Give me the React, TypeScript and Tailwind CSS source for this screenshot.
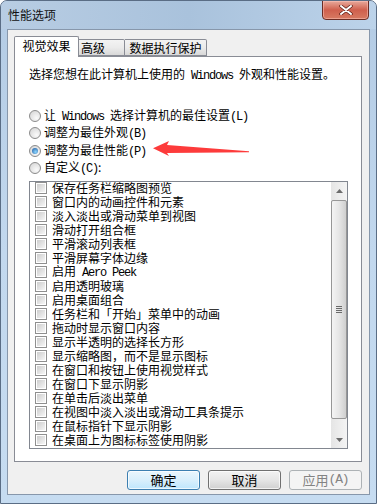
import React from "react";

const effects = [
  "保存任务栏缩略图预览",
  "窗口内的动画控件和元素",
  "淡入淡出或滑动菜单到视图",
  "滑动打开组合框",
  "平滑滚动列表框",
  "平滑屏幕字体边缘",
  "AERO",
  "启用透明玻璃",
  "启用桌面组合",
  "任务栏和「开始」菜单中的动画",
  "拖动时显示窗口内容",
  "显示半透明的选择长方形",
  "显示缩略图，而不是显示图标",
  "在窗口和按钮上使用视觉样式",
  "在窗口下显示阴影",
  "在单击后淡出菜单",
  "在视图中淡入淡出或滑动工具条提示",
  "在鼠标指针下显示阴影",
  "在桌面上为图标标签使用阴影",
];

// half-width latin in the dialog font is narrow, squeeze the mono face to match
function Lat({ children }: { children: React.ReactNode }) {
  return (
    <span className="font-['Liberation_Mono',monospace] tracking-[-1.2px] whitespace-pre">
      {children}
    </span>
  );
}

function Radio({ checked }: { checked?: boolean }) {
  return (
    <span className="w-[12px] h-[12px] rounded-full border border-[#8b8b8b] bg-[radial-gradient(circle_at_65%_70%,#fafafa,#d2d2d2)] flex items-center justify-center shrink-0">
      {checked && (
        <span className="w-[6px] h-[6px] rounded-full bg-[radial-gradient(circle_at_60%_65%,#8fd8ff,#15509a)]" />
      )}
    </span>
  );
}

function Check() {
  return (
    <span className="w-[12px] h-[12px] border border-[#8f8f8f] bg-white p-[1px] shrink-0 flex">
      <span className="flex-1 bg-gradient-to-br from-[#cdcdcd] to-[#f6f6f6]" />
    </span>
  );
}

function Arrow({ up }: { up?: boolean }) {
  return (
    <svg width="7" height="4" viewBox="0 0 7 4">
      <polygon points={up ? "0,4 3.5,0 7,4" : "0,0 7,0 3.5,4"} fill="#6b6b6b" />
    </svg>
  );
}

export default function App() {
  return (
    <div className="w-[377px] h-[504px] bg-white font-['Noto_Sans_CJK_SC',sans-serif] text-[12px] text-black">
      <div className="relative w-[377px] h-[504px] rounded-t-[7px] border border-[#5a6d85] bg-gradient-to-b from-[#b3cbe4] via-[#c2d8ee] to-[#c6dcf1] flex flex-col overflow-hidden">
        {/* title bar */}
        <div className="h-[28px] flex items-center pl-[7px] bg-gradient-to-r from-[#b8cde3] via-[#a9c2dc] to-[#bcd3ea]">
          <span className="leading-[14px] text-[#111] mt-[-1px]">性能选项</span>
        </div>
        <div className="absolute right-[7px] top-[-1px] w-[47px] h-[20px] rounded-b-[4px] border border-[#6b2d25] bg-gradient-to-b from-[#e7a99c] via-[#cf5f4d] to-[#d77a62] flex items-center justify-center shadow-[inset_0_0_0_1px_rgba(255,200,190,0.5)]">
          <svg width="14" height="10" viewBox="0 0 14 10">
            <path d="M2 1 L12 9 M12 1 L2 9" stroke="#5a1e16" strokeWidth="3.4" strokeLinecap="round" />
            <path d="M2 1 L12 9 M12 1 L2 9" stroke="#ffffff" strokeWidth="2" strokeLinecap="round" />
          </svg>
        </div>

        {/* dialog body */}
        <div className="mx-[6px] h-[466px] border border-[#8797ab] bg-[#f0f0f0] pt-[6px] px-[6px]">
          <div className="flex items-end h-[20px]">
            <div className="relative z-10 -mb-px w-[65px] h-[21px] bg-white border border-b-0 border-[#898c95] rounded-t-[2px] flex justify-center pt-[2px] leading-[14px]">
              视觉效果
            </div>
            <div className="w-[46px] h-[17px] border border-l-0 border-[#898c95] rounded-tr-[2px] bg-gradient-to-b from-[#f3f3f3] via-[#ebebeb] to-[#d8d8d8] pl-[2px] pt-[1px] leading-[14px]">
              高级
            </div>
            <div className="w-[82px] h-[17px] border border-l-0 border-[#898c95] rounded-tr-[2px] bg-gradient-to-b from-[#f3f3f3] via-[#ebebeb] to-[#d8d8d8] flex justify-center pt-[1px] leading-[14px]">
              数据执行保护
            </div>
          </div>

          <div className="relative w-[348px] h-[406px] border border-[#898c95] bg-white pl-[14px] pt-[9px]">
            <p className="leading-[16px]">
              选择您想在此计算机上使用的<Lat> Windows </Lat>外观和性能设置。
            </p>

            <div className="mt-[23px] flex flex-col">
              <div className="h-[17.5px] flex items-center gap-[3px]">
                <Radio />
                <span className="leading-[14px]">
                  让<Lat> Windows </Lat>选择计算机的最佳设置<Lat>(L)</Lat>
                </span>
              </div>
              <div className="h-[17.5px] flex items-center gap-[3px]">
                <Radio />
                <span className="leading-[14px]">
                  调整为最佳外观<Lat>(B)</Lat>
                </span>
              </div>
              <div className="h-[17.5px] flex items-center gap-[3px]">
                <Radio checked />
                <span className="leading-[14px]">
                  调整为最佳性能<Lat>(P)</Lat>
                </span>
              </div>
              <div className="h-[17.5px] flex items-center gap-[3px]">
                <Radio />
                <span className="leading-[14px]">
                  自定义<Lat>(C)</Lat>:
                </span>
              </div>
            </div>

            <div className="mt-[4px] w-[319px] h-[268px] border border-[#828790] flex">
              <div className="flex-1 flex flex-col pt-[0px] -mt-px">
                {effects.map((e) => (
                  <div key={e} className="h-[14px] shrink-0 flex items-center gap-[5px] pl-[5px]">
                    <Check />
                    <span className="leading-[14px] whitespace-nowrap">
                      {e === "AERO" ? (
                        <>
                          启用<Lat> Aero Peek</Lat>
                        </>
                      ) : (
                        e
                      )}
                    </span>
                  </div>
                ))}
              </div>
              <div className="w-[16px] flex flex-col bg-gradient-to-r from-[#e5e5e5] to-[#f4f4f4]">
                <div className="h-[18px] flex items-center justify-center">
                  <Arrow up />
                </div>
                <div className="h-[219px] rounded-[2px] border border-[#979797] bg-gradient-to-r from-[#f4f4f4] via-[#e6e6e6] to-[#cfcfcf] flex flex-col items-center justify-center gap-[1px]">
                  <span className="w-[6px] h-px bg-[#6a6a6a]" />
                  <span className="w-[6px] h-px bg-[#6a6a6a]" />
                  <span className="w-[6px] h-px bg-[#6a6a6a]" />
                  <span className="w-[6px] h-px bg-[#6a6a6a]" />
                </div>
                <div className="flex-1" />
                <div className="h-[17px] flex items-center justify-center">
                  <Arrow />
                </div>
              </div>
            </div>

            {/* red annotation arrow */}
            <svg
              className="absolute left-[136px] top-[82px]"
              width="100"
              height="20"
              viewBox="0 0 100 20"
            >
              <polygon
                points="2,9.3 18,2 16,6 98,12.3 98,13.2 16,14 18,17"
                fill="#fd3b3b"
              />
            </svg>
          </div>

          <div className="mt-[8px] w-[348px] flex justify-end gap-[8px] text-[13px]">
            <button className="w-[73px] h-[20px] rounded-[3px] border border-[#3c7fb1] bg-gradient-to-b from-[#eaf6fd] via-[#d9effc] to-[#bee6fd] shadow-[inset_0_0_0_1px_rgba(255,255,255,0.7)] flex items-center justify-center leading-[14px]">
              确定
            </button>
            <button className="w-[73px] h-[20px] rounded-[3px] border border-[#707070] bg-gradient-to-b from-[#f2f2f2] via-[#e6e6e6] to-[#d0d0d0] shadow-[inset_0_0_0_1px_rgba(255,255,255,0.7)] flex items-center justify-center leading-[14px]">
              取消
            </button>
            <button className="w-[73px] h-[20px] rounded-[3px] border border-[#adb2b5] bg-[#f4f4f4] text-[#838383] flex items-center justify-center leading-[14px]">
              应用<Lat>(A)</Lat>
            </button>
          </div>
        </div>
      </div>
    </div>
  );
}
